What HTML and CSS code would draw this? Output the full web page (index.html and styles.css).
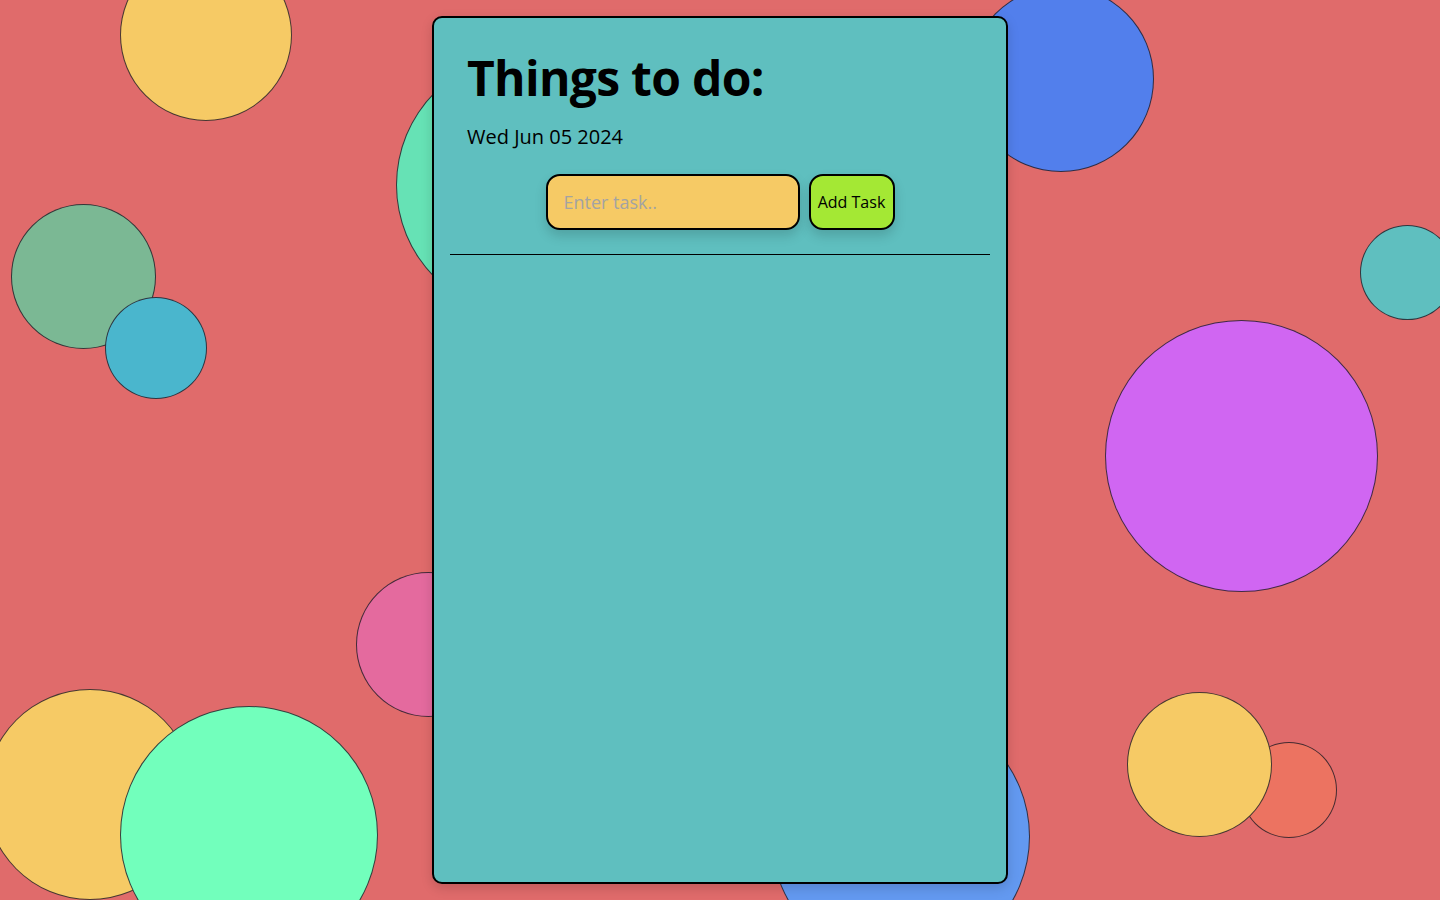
FILE: index.html
```html
<!DOCTYPE html>
<html lang="en">
<head>
<meta charset="utf-8">
<title>Things to do</title>
<link rel="stylesheet" href="styles.css">
</head>
<body>
<div class="bubbles" aria-hidden="true">
  <span class="bubble b-yellow-top"></span>
  <span class="bubble b-mint-mid"></span>
  <span class="bubble b-blue-top"></span>
  <span class="bubble b-sage"></span>
  <span class="bubble b-cyan"></span>
  <span class="bubble b-teal"></span>
  <span class="bubble b-purple"></span>
  <span class="bubble b-pink"></span>
  <span class="bubble b-yellow-bl"></span>
  <span class="bubble b-mint-bl"></span>
  <span class="bubble b-blue-bottom"></span>
  <span class="bubble b-salmon"></span>
  <span class="bubble b-yellow-br"></span>
</div>
<main class="card">
  <h1 class="title">Things to do:</h1>
  <p class="date">Wed Jun 05 2024</p>
  <form class="task-form">
    <input class="task-input" type="text" placeholder="Enter task..">
    <button class="task-btn" type="button">Add Task</button>
  </form>
  <hr class="divider">
  <ul class="task-list"></ul>
</main>
</body>
</html>
```
FILE: styles.css
```css
* { box-sizing: border-box; }
html, body {
  margin: 0;
  height: 100%;
}
body {
  background: #e06b6b;
  font-family: "Open Sans", "Noto Sans", sans-serif;
  overflow: hidden;
  position: relative;
  padding-top: 16px;
}
.bubbles {
  position: absolute;
  inset: 0;
  overflow: hidden;
}
.bubble {
  position: absolute;
  border-radius: 50%;
  border: 1px solid rgba(40, 30, 40, 0.85);
}
.b-yellow-top { left: 120px; top: -51px; width: 172px; height: 172px; background: #f6ca65; }
.b-mint-mid { left: 396px; top: 54px; width: 262px; height: 262px; background: #66e2b5; }
.b-blue-top { left: 968px; top: -14px; width: 186px; height: 186px; background: #527fec; }
.b-sage { left: 11px; top: 204px; width: 145px; height: 145px; background: #7bb894; }
.b-cyan { left: 105px; top: 297px; width: 102px; height: 102px; background: #4ab6cd; }
.b-teal { left: 1360px; top: 225px; width: 95px; height: 95px; background: #5fbfbf; }
.b-purple { left: 1105px; top: 320px; width: 273px; height: 272px; background: #d066f2; }
.b-pink { left: 356px; top: 572px; width: 145px; height: 145px; background: #e46a9e; }
.b-yellow-bl { left: -15px; top: 689px; width: 210px; height: 211px; background: #f6ca65; }
.b-mint-bl { left: 120px; top: 706px; width: 258px; height: 258px; background: #72ffbc; }
.b-blue-bottom { left: 771px; top: 707px; width: 259px; height: 259px; background: #6399f0; }
.b-salmon { left: 1241px; top: 742px; width: 96px; height: 96px; background: #ec7361; }
.b-yellow-br { left: 1127px; top: 692px; width: 145px; height: 145px; background: #f6ca65; }

.card {
  position: relative;
  z-index: 1;
  width: 576px;
  height: 868px;
  margin: 0 auto;
  background: #5fbfbf;
  border: 2px solid #000;
  border-radius: 10px;
  padding: 0 16px;
  box-shadow: 0 4px 12px rgba(0, 0, 0, 0.15);
}
.title {
  margin: 28px 0 0 17px;
  font-size: 48px;
  font-weight: 700;
  line-height: 64px;
  letter-spacing: -0.7px;
  color: #000;
}
.date {
  margin: 13px 0 0 17px;
  font-size: 20px;
  line-height: 28px;
  color: #000;
}
.task-form {
  display: flex;
  justify-content: center;
  gap: 9px;
  margin-top: 23px;
}
.task-input {
  width: 254px;
  height: 56px;
  background: #f6ca65;
  border: 2px solid #000;
  border-radius: 14px;
  padding: 0 16px;
  font-family: inherit;
  font-size: 18px;
  color: #000;
  box-shadow: 0 6px 12px rgba(0, 0, 0, 0.15);
  outline: none;
}
.task-input::placeholder { color: #a3a3a3; }
.task-btn {
  width: 86px;
  height: 56px;
  background: #a4e834;
  border: 2px solid #000;
  border-radius: 14px;
  padding: 0;
  font-family: inherit;
  font-size: 16px;
  color: #000;
  box-shadow: 0 6px 12px rgba(0, 0, 0, 0.15);
  cursor: pointer;
}
.divider {
  margin: 24px 0 0;
  border: 0;
  border-top: 1px solid #000;
  height: 0;
}
.task-list {
  margin: 0;
  padding: 0;
  list-style: none;
}
```
